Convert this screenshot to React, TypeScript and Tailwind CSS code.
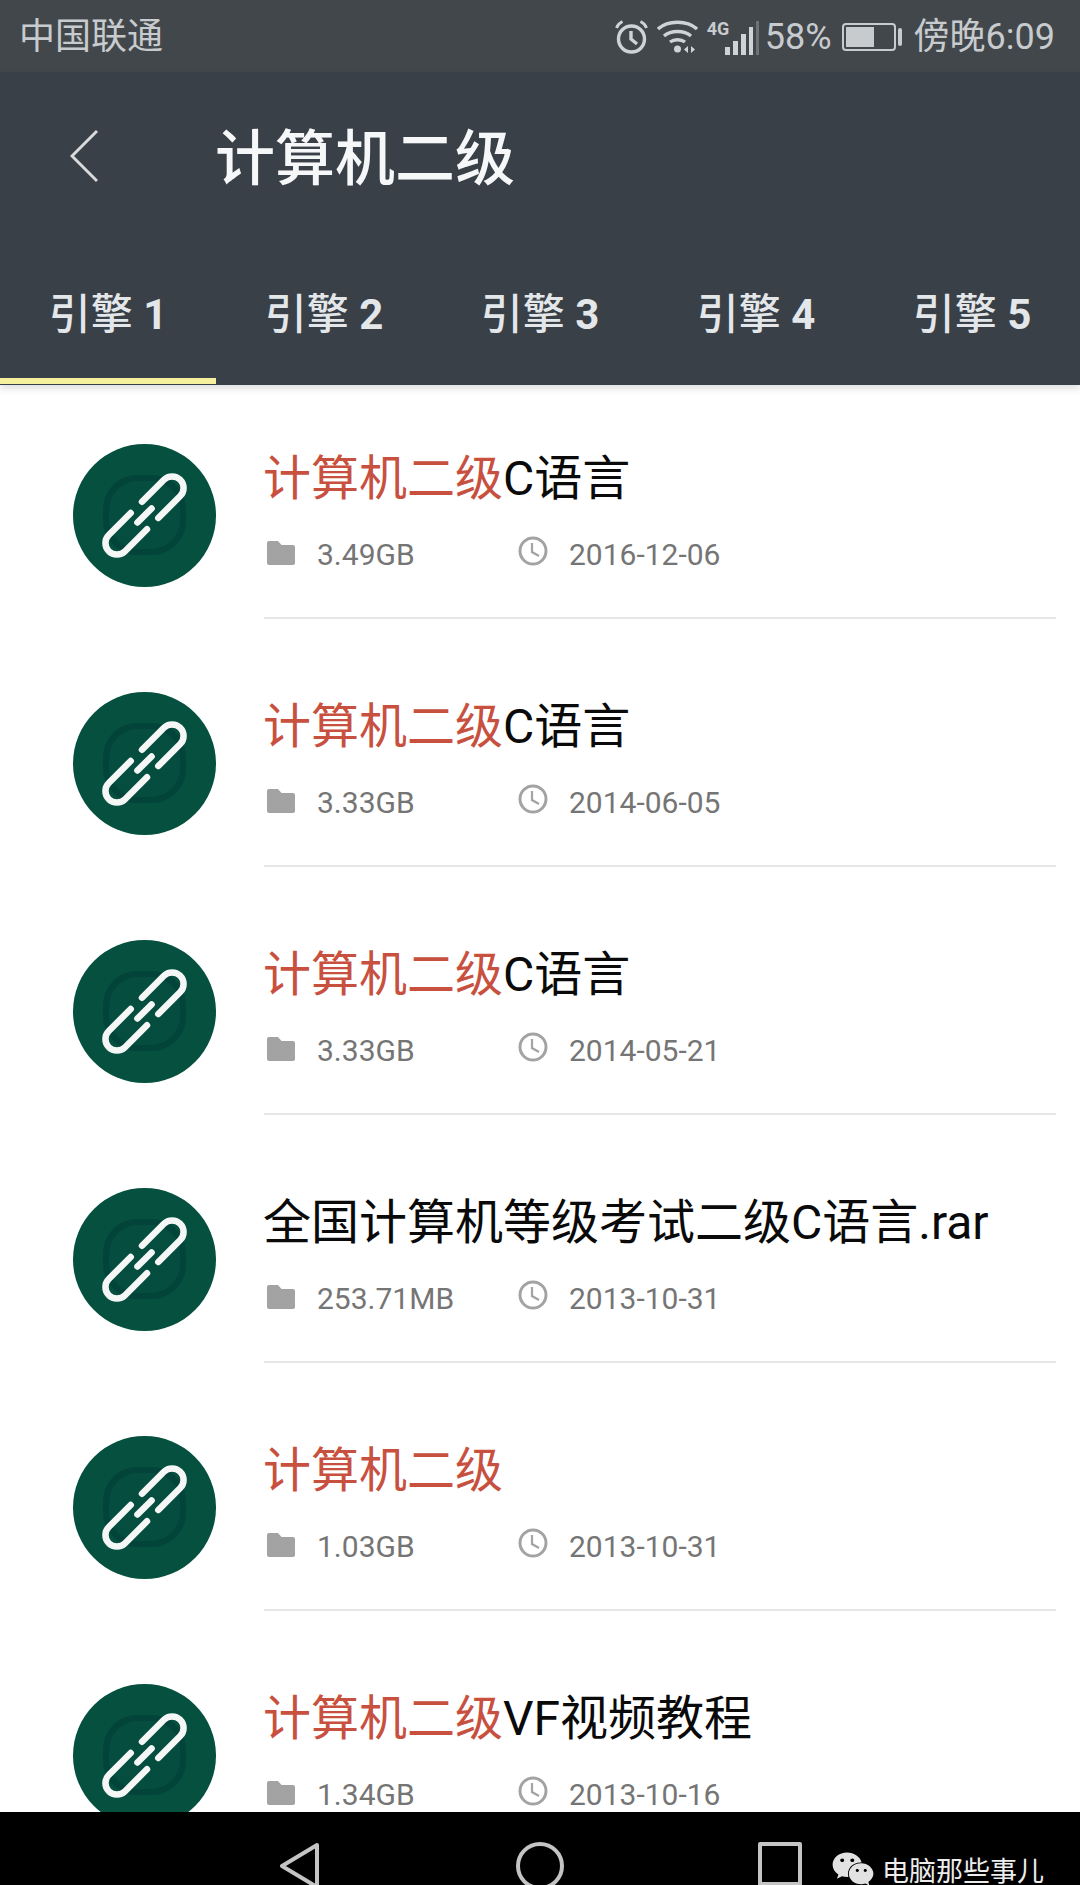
import { FaWeixin } from "react-icons/fa"

const FONT = "font-['Roboto','Noto_Sans_CJK_SC',sans-serif]"

interface Row {
  hit: string
  rest: string
  size: string
  date: string
}

const rows: Row[] = [
  { hit: "计算机二级", rest: "C语言", size: "3.49GB", date: "2016-12-06" },
  { hit: "计算机二级", rest: "C语言", size: "3.33GB", date: "2014-06-05" },
  { hit: "计算机二级", rest: "C语言", size: "3.33GB", date: "2014-05-21" },
  { hit: "", rest: "全国计算机等级考试二级C语言.rar", size: "253.71MB", date: "2013-10-31" },
  { hit: "计算机二级", rest: "", size: "1.03GB", date: "2013-10-31" },
  { hit: "计算机二级", rest: "VF视频教程", size: "1.34GB", date: "2013-10-16" },
]

const tabs = [1, 2, 3, 4, 5]

function LinkBadge() {
  return (
    <svg viewBox="0 0 143 143" className="w-[143px] h-[143px] shrink-0">
      <circle cx="71.5" cy="71.5" r="71.5" fill="#05503f" />
      <rect x="30" y="31" width="83" height="80" rx="34" fill="#03443a" />
      <rect x="36" y="37" width="71" height="68" rx="29" fill="#054d3f" />
      <g
        transform="rotate(-45 71.5 71.5) translate(71.5 71.5)"
        fill="none"
        stroke="#f4f7f6"
        strokeWidth="6.5"
        strokeLinecap="round"
      >
        <path d="M8 -11.5 H39 a11.5 11.5 0 0 1 0 23 H8" />
        <path d="M-8 -11.5 H-39 a11.5 11.5 0 0 0 0 23 H-8" />
        <path d="M-10 0 H10" />
      </g>
    </svg>
  )
}

function FolderIcon() {
  return (
    <svg viewBox="0 0 28 24" className="w-[28px] h-[24px] shrink-0">
      <path
        d="M2 0h9l3.5 4H26a2 2 0 0 1 2 2v16a2 2 0 0 1-2 2H2a2 2 0 0 1-2-2V2a2 2 0 0 1 2-2z"
        fill="#a3a3a3"
      />
    </svg>
  )
}

function ClockIcon() {
  return (
    <svg viewBox="0 0 30 30" className="w-[30px] h-[30px] shrink-0" fill="none" stroke="#a3a3a3">
      <circle cx="15" cy="15" r="13" strokeWidth="3" />
      <path d="M14 7v9l7 4" strokeWidth="2.2" />
    </svg>
  )
}

function AlarmIcon() {
  return (
    <svg viewBox="0 0 33 34" className="w-[33px] h-[34px] shrink-0" fill="none" stroke="#d0d3d5" strokeWidth="3.4">
      <circle cx="16.500" cy="19" r="13" />
      <path d="M16 11v8l6 5" />
      <path d="M1.500 8c1-3 3-5 6-6.500M31.500 8c-1-3-3-5-6-6.500" strokeWidth="2.800" />
    </svg>
  )
}

function WifiIcon() {
  return (
    <svg viewBox="0 0 41 34" className="w-[41px] h-[34px] shrink-0" fill="none" stroke="#d0d3d5" strokeWidth="3.4">
      <path d="M1 9C11 0 30 0 40 9" />
      <path d="M7 16c7-6 20-6 27 0" />
      <path d="M13 22c4-3 11-3 15 0" />
      <circle cx="20.500" cy="29" r="3.500" fill="#d0d3d5" stroke="none" />
      <path d="M31 26v7l-4-3.500zM34 26v7l4-3.500z" fill="#d0d3d5" stroke="none" />
    </svg>
  )
}

function SignalIcon() {
  return (
    <svg viewBox="0 0 34 34" className="w-[34px] h-[34px] shrink-0" fill="#d0d3d5">
      <rect x="0" y="26" width="5" height="8" />
      <rect x="8" y="20" width="5" height="14" />
      <rect x="16" y="13" width="5" height="21" />
      <rect x="24" y="6" width="4" height="28" />
      <rect x="31" y="0" width="3" height="34" fill="#6d7276" />
    </svg>
  )
}

function StatusBar() {
  return (
    <div className="h-[72px] bg-[#42474c] flex items-center justify-between pl-[19px] pr-[25px] pt-[2px] text-[#c8cbce] text-[36px] leading-[40px]">
      <span>中国联通</span>
      <div className="flex items-center">
        <AlarmIcon />
        <div className="ml-[9px]">
          <WifiIcon />
        </div>
        <span className="ml-[9px] -mt-[16px] text-[18px] leading-[18px] font-bold w-[18px] font-['Liberation_Sans_Narrow','Roboto',sans-serif]">
          4G
        </span>
        <div className="mt-[2px]">
          <SignalIcon />
        </div>
        <span className="ml-[6px]">58%</span>
        <div className="ml-[10px] w-[54px] h-[28px] border-2 border-[#c8cbce] rounded-[4px] p-[2px]">
          <div className="w-[28px] h-full bg-[#c8cbce]" />
        </div>
        <div className="ml-[2px] w-[4px] h-[18px] rounded-[2px] bg-[#c8cbce]" />
        <span className="ml-[12px]">傍晚6:09</span>
      </div>
    </div>
  )
}

function Header() {
  return (
    <div className="relative z-10 h-[313px] bg-[#3a4047] shadow-[0_4px_7px_rgba(0,0,0,0.12)]">
      <div className="h-[172px] flex items-center">
        <svg viewBox="0 0 28 54" className="ml-[70px] -mt-[4px] w-[28px] h-[54px]" fill="none" stroke="#d8dadc" strokeWidth="3">
          <path d="M27 2 2 27l25 25" />
        </svg>
        <h1 className="ml-[117px] mt-[4px] text-[60px] leading-[70px] text-[#f6f7f8] font-medium">计算机二级</h1>
      </div>
      <div className="h-[141px] grid grid-cols-5">
        {tabs.map((n) => (
          <div key={n} className="flex flex-col">
            <div className="pt-[47px] h-[95px] text-center text-[42px] leading-[48px] font-medium text-[#e4e7ea]">
              引擎 <span className="font-bold">{n}</span>
            </div>
            {n === 1 && <div className="mt-auto mb-[1px] h-[6px] w-[216px] bg-[#f5ef9e]" />}
          </div>
        ))}
      </div>
    </div>
  )
}

function ResultRow({ row }: { row: Row }) {
  return (
    <div className="flex mb-[73px]">
      <div className="ml-[73px]">
        <LinkBadge />
      </div>
      <div className="ml-[48px] flex-1 h-[175px] border-b-2 border-[#e6e6e6]">
        <div className="-ml-[1px] h-[70px] text-[48px] leading-[70px] text-[#0a0a0a]">
          <span className="text-[#c8503f]">{row.hit}</span>
          {row.rest}
        </div>
        <div className="mt-[6px] h-[70px] flex items-center text-[30px] leading-[36px] text-[#757575]">
          <div className="w-[254px] flex items-center pl-[3px]">
            <div className="-mt-[4px]">
              <FolderIcon />
            </div>
            <span className="ml-[22px]">{row.size}</span>
          </div>
          <div className="-mt-[8px]">
            <ClockIcon />
          </div>
          <span className="ml-[21px]">{row.date}</span>
        </div>
      </div>
    </div>
  )
}

function NavBar() {
  return (
    <div className="relative z-10 h-[73px] shrink-0 bg-black overflow-hidden flex items-start pt-[30px]">
      <svg viewBox="0 0 41 48" className="ml-[279px] w-[41px] h-[48px] shrink-0" fill="none" stroke="#c4c4c4" strokeWidth="4">
        <path d="M38 3 3 24l35 21z" strokeLinejoin="round" />
      </svg>
      <div className="ml-[196px] w-[48px] h-[48px] shrink-0 rounded-full border-4 border-[#c4c4c4]" />
      <div className="ml-[194px] w-[44px] h-[44px] shrink-0 rounded-[2px] border-4 border-[#c4c4c4]" />
      <FaWeixin className="ml-[29px] mt-[8px] w-[44px] h-[38px] shrink-0 text-[#e2e2e2]" />
      <span className="ml-[7px] mt-[17px] text-[27px] leading-[26px] text-[#ececec] whitespace-nowrap">电脑那些事儿</span>
    </div>
  )
}

export default function App() {
  return (
    <div className={`${FONT} w-[1080px] h-[1885px] bg-white flex flex-col overflow-hidden`}>
      <StatusBar />
      <Header />
      <div className="flex-1 overflow-hidden pt-[59px] pr-[24px]">
        {rows.map((row, i) => (
          <ResultRow key={i} row={row} />
        ))}
      </div>
      <NavBar />
    </div>
  )
}
